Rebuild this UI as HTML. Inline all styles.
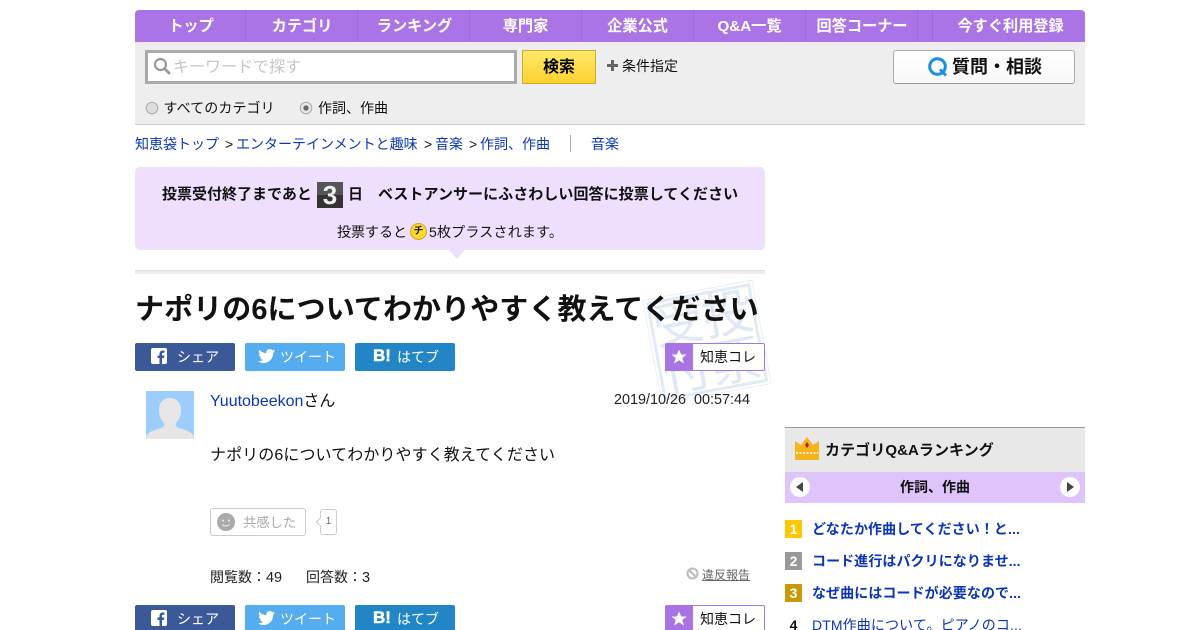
<!DOCTYPE html>
<html lang="ja"><head><meta charset="utf-8"><title>ナポリの6についてわかりやすく教えてください</title>
<style>
*{box-sizing:border-box}
html,body{margin:0;padding:0;width:1200px;height:630px;overflow:hidden;background:#fff}
body{position:relative;font-family:"Liberation Sans","Noto Sans CJK JP",sans-serif;color:#111;font-size:14px}
.a{position:absolute;white-space:nowrap}
a{color:#0b34b8;text-decoration:none}
.nav{left:135px;top:10px;width:950px;height:32px;background:#ab74e6;border-radius:4px 4px 0 0}
.nav i{position:absolute;top:0;width:1px;height:31px;background:#9f68da}
.nav b{position:absolute;top:0;line-height:33px;color:#fff;font-size:15.2px;text-align:center}
.sh{height:28px;width:100px;border-radius:2px;color:#fff;font-size:14px;line-height:29px}
.sh span{position:absolute;top:0}
.col{width:100px;height:28px;border:1px solid #a873e3;border-radius:2px;background:#fff;line-height:27px;font-size:14px}
.col s{position:absolute;left:-1px;top:-1px;width:28px;height:28px;background:#a873e3;border-radius:2px 0 0 2px;display:block}
.col s svg{position:absolute;left:6px;top:6px}
.col span{position:absolute;left:34px;top:0}
.rk{left:785px;width:17px;height:18px;color:#fff;font-weight:bold;font-size:14px;line-height:19px;text-align:center}
.rt{left:812px;font-size:14px;font-weight:bold;line-height:18px;letter-spacing:.08px}
</style></head><body>

<div class="a nav">
<i style="left:110px"></i><i style="left:222px"></i><i style="left:334px"></i><i style="left:446px"></i><i style="left:558px"></i><i style="left:670px"></i><i style="left:782px"></i><i style="left:797px"></i>
<b style="left:1px;width:110px">トップ</b><b style="left:111.500px;width:111px">カテゴリ</b><b style="left:224px;width:111px">ランキング</b><b style="left:335px;width:111px">専門家</b><b style="left:447px;width:111px">企業公式</b><b style="left:559px;width:111px">Q&amp;A一覧</b><b style="left:671.500px;width:111px">回答コーナー</b><b style="left:799.500px;width:152px">今すぐ利用登録</b>
</div>
<div class="a" style="left:135px;top:42px;width:950px;height:83px;background:#eee;border-bottom:1px solid #ccc"></div>

<div class="a" style="left:145px;top:50px;width:372px;height:34px;background:#fff;border:3px solid #aaa"></div>
<svg class="a" style="left:153px;top:57px" width="18" height="18" viewBox="0 0 18 18"><circle cx="7.5" cy="7.5" r="5.5" fill="none" stroke="#999" stroke-width="2.2"/><path d="M11.5 11.5L16 16" stroke="#999" stroke-width="2.8" stroke-linecap="round"/></svg>
<div class="a" style="left:173px;top:57px;font-size:16px;line-height:21px;color:#c6c6c6">キーワードで探す</div>
<div class="a" style="left:522px;top:50px;width:74px;height:34px;background:linear-gradient(#ffe96a,#fdd22e);border:1px solid #cfa92a;font-weight:bold;font-size:16px;line-height:34px;text-align:center;color:#000">検索</div>
<svg class="a" style="left:606px;top:59px" width="13" height="13" viewBox="0 0 13 13"><path d="M6.500 1v11M1 6.500h11" stroke="#666" stroke-width="3"/></svg>
<div class="a" style="left:622px;top:56px;font-size:14px;line-height:20px">条件指定</div>
<div class="a" style="left:893px;top:50px;width:182px;height:34px;background:linear-gradient(#fff,#f8f8f8);border:1px solid #aaa;border-bottom:1px solid #999;border-radius:3px"></div>
<svg class="a" style="left:927px;top:56px" width="22" height="22" viewBox="0 0 22 22"><circle cx="10.500" cy="10.500" r="7.800" fill="none" stroke="#1a8fe3" stroke-width="3"/><path d="M13 13.500L19 19.500" stroke="#1a8fe3" stroke-width="3"/></svg>
<div class="a" style="left:952px;top:55px;font-size:18px;font-weight:bold;line-height:24px">質問・相談</div>

<svg class="a" style="left:145px;top:101px" width="14" height="14" viewBox="0 0 14 14"><circle cx="7" cy="7" r="5.800" fill="#ddd" stroke="#aaa"/></svg>
<div class="a" style="left:163.500px;top:98px;font-size:14px;line-height:21px;letter-spacing:.1px">すべてのカテゴリ</div>
<svg class="a" style="left:299px;top:101px" width="14" height="14" viewBox="0 0 14 14"><circle cx="7" cy="7" r="5.800" fill="#e4e4e4" stroke="#aaa"/><circle cx="7" cy="7" r="2.600" fill="#666"/></svg>
<div class="a" style="left:318px;top:98px;font-size:14px;line-height:21px">作詞、作曲</div>

<div class="a" style="left:135px;top:134px;font-size:14px;line-height:20px"><a href="#">知恵袋トップ</a></div>
<div class="a" style="left:225px;top:134px;font-size:14px;line-height:20px">&gt;</div>
<div class="a" style="left:236px;top:134px;font-size:14px;line-height:20px"><a href="#">エンターテインメントと趣味</a></div>
<div class="a" style="left:424px;top:134px;font-size:14px;line-height:20px">&gt;</div>
<div class="a" style="left:435px;top:134px;font-size:14px;line-height:20px"><a href="#">音楽</a></div>
<div class="a" style="left:469px;top:134px;font-size:14px;line-height:20px">&gt;</div>
<div class="a" style="left:480px;top:134px;font-size:14px;line-height:20px"><a href="#">作詞、作曲</a></div>
<div class="a" style="left:570px;top:135px;width:1px;height:17px;background:#aaa"></div>
<div class="a" style="left:591px;top:134px;font-size:14px;line-height:20px"><a href="#">音楽</a></div>

<div class="a" style="left:135px;top:167px;width:630px;height:83px;background:#eddffd;border-radius:5px"></div>
<div class="a" style="left:449px;top:250px;width:0;height:0;border-left:8px solid transparent;border-right:8px solid transparent;border-top:9px solid #eddffd"></div>
<div class="a" style="left:162px;top:184px;font-size:15px;font-weight:bold;line-height:21px">投票受付終了まであと</div>
<div class="a" style="left:317px;top:182px;width:26px;height:26px;background:linear-gradient(#555 50%,#333 50%);color:#eee;font-size:26px;font-weight:bold;line-height:26px;text-align:center">3</div>
<div class="a" style="left:348px;top:184px;font-size:15px;font-weight:bold;line-height:21px">日</div>
<div class="a" style="left:378px;top:184px;font-size:15px;font-weight:bold;line-height:21px;letter-spacing:.06px">ベストアンサーにふさわしい回答に投票してください</div>
<div class="a" style="left:337px;top:222px;font-size:14px;line-height:21px">投票すると</div>
<div class="a" style="left:410px;top:223px;width:17px;height:17px;border-radius:50%;background:#fbd92f;border:1px solid #d4a820;font-size:10px;font-weight:bold;line-height:15px;text-align:center;color:#222">チ</div>
<div class="a" style="left:429px;top:222px;font-size:14px;line-height:21px;letter-spacing:.2px">5枚プラスされます。</div>

<div class="a" style="left:135px;top:270px;width:630px;height:4px;background:#eee;border-top:1px solid #ddd"></div>

<div class="a" style="left:654px;top:292px;width:106px;height:100px;border:3px solid #e0ebf6;outline:1px solid #e8f0f9;outline-offset:2px;transform:rotate(-10.500deg);color:#dfe9f5;font-size:50px;line-height:48px;overflow:hidden;font-weight:normal;text-align:center;white-space:normal;letter-spacing:0">受投<br>付票</div>

<div class="a" style="left:135px;top:291px;font-size:29px;font-weight:bold;line-height:38px;color:#111;letter-spacing:.08px">ナポリの6についてわかりやすく教えてください</div>

<div class="a sh" style="left:135px;top:343px;background:#3b5998"><svg class="a" style="left:16px;top:5px" width="16" height="16" viewBox="0 0 16 16"><rect width="16" height="16" rx="2" fill="#fff"/><path d="M11 16V10h2l.400-2.500H11V6c0-.800.300-1.200 1.200-1.200h1.300V2.600c-.500-.100-1.100-.100-1.900-.100C10 2.500 8.500 3.600 8.500 5.700v1.800H6.500V10h2v6z" fill="#3b5998"/></svg><span style="left:42px">シェア</span></div>
<div class="a sh" style="left:245px;top:343px;background:#55acee"><svg class="a" style="left:13px;top:6px" width="17" height="14" viewBox="0 0 24 20"><path d="M24 2.400c-.900.400-1.800.700-2.800.800 1-.600 1.800-1.600 2.200-2.700-1 .600-2 1-3.100 1.200C19.300.700 18 0 16.600 0c-2.700 0-4.900 2.200-4.900 4.900 0 .400 0 .800.100 1.100C7.700 5.800 4.100 3.900 1.700.900 1.200 1.600 1 2.500 1 3.400c0 1.700.900 3.200 2.200 4.100-.800 0-1.600-.200-2.200-.600v.100c0 2.400 1.700 4.400 3.900 4.800-.400.100-.800.200-1.300.200-.300 0-.600 0-.900-.100.600 2 2.400 3.400 4.600 3.400-1.700 1.300-3.800 2.100-6.100 2.100-.400 0-.800 0-1.200-.100C2.200 19.300 4.800 20 7.500 20c9.100 0 14-7.500 14-14v-.600c1-.700 1.800-1.600 2.500-3z" fill="#fff"/></svg><span style="left:35px">ツイート</span></div>
<div class="a sh" style="left:355px;top:343px;background:#2285c6"><span style="left:18px;font-weight:bold;font-size:17px;line-height:25px;-webkit-text-stroke:.5px #fff">B!</span><span style="left:42px">はてブ</span></div>
<div class="a col" style="left:665px;top:343px"><s><svg width="16" height="16" viewBox="0 0 16 16"><path d="M8 .500l2.200 5h5.300l-4.200 3.500 1.600 5.500L8 11.300l-4.900 3.200 1.600-5.500L.500 5.500h5.300z" fill="#fff"/></svg></s><span>知恵コレ</span></div>

<svg class="a" style="left:146px;top:391px" width="48" height="48" viewBox="0 0 48 48"><rect width="48" height="48" fill="#9ccdfb"/><path d="M0 48v-2c1-5 9-7 15-9 3-1 4-3 3-5-3-3-5-7-5-13C13 12 17 7 24 7s11 5 11 12c0 6-2 10-5 13-1 2 0 4 3 5 6 2 14 4 15 9v2z" fill="#e6e6e6"/></svg>
<div class="a" style="left:210px;top:391px;font-size:16px;line-height:21px"><a href="#">Yuutobeekon</a>さん</div>
<div class="a" style="left:614px;top:391px;font-size:14.400px;line-height:18px;color:#222">2019/10/26&nbsp; 00:57:44</div>
<div class="a" style="left:210px;top:445px;font-size:16px;line-height:22px;letter-spacing:.09px">ナポリの6についてわかりやすく教えてください</div>

<div class="a" style="left:210px;top:508px;width:96px;height:28px;border:1px solid #ccc;border-radius:3px"></div>
<svg class="a" style="left:217px;top:513px" width="18" height="18" viewBox="0 0 18 18"><circle cx="9" cy="9" r="9" fill="#aaa"/><circle cx="6" cy="7.500" r="1" fill="#eee"/><circle cx="12" cy="7.500" r="1" fill="#eee"/><path d="M5.500 11.500c2 2 5 2 7 0" stroke="#eee" fill="none"/></svg>
<div class="a" style="left:243px;top:512px;font-size:13.300px;line-height:21px;color:#aaa">共感した</div>
<div class="a" style="left:320px;top:509px;width:17px;height:26px;border:1px solid #ccc;border-radius:3px;font-size:10px;line-height:24px;text-align:center;color:#666;background:#fff">1</div>
<div class="a" style="left:317px;top:519px;width:6px;height:6px;border-left:1px solid #ccc;border-bottom:1px solid #ccc;background:#fff;transform:rotate(45deg)"></div>

<div class="a" style="left:210px;top:567px;font-size:14px;line-height:20px;color:#222">閲覧数：<span style="font-size:14.400px">49</span></div>
<div class="a" style="left:306px;top:567px;font-size:14px;line-height:20px;color:#222">回答数：<span style="font-size:14.400px">3</span></div>
<svg class="a" style="left:686px;top:567px" width="13" height="13" viewBox="0 0 13 13"><circle cx="6.500" cy="6.500" r="5" fill="none" stroke="#bbb" stroke-width="2"/><path d="M3 3l7 7" stroke="#bbb" stroke-width="2"/></svg>
<div class="a" style="left:702px;top:566px;font-size:12px;line-height:18px;color:#666;text-decoration:underline">違反報告</div>

<div class="a sh" style="left:135px;top:605px;background:#3b5998"><svg class="a" style="left:16px;top:5px" width="16" height="16" viewBox="0 0 16 16"><rect width="16" height="16" rx="2" fill="#fff"/><path d="M11 16V10h2l.400-2.500H11V6c0-.800.300-1.200 1.200-1.200h1.300V2.600c-.500-.100-1.100-.100-1.900-.100C10 2.500 8.500 3.600 8.500 5.700v1.800H6.500V10h2v6z" fill="#3b5998"/></svg><span style="left:42px">シェア</span></div>
<div class="a sh" style="left:245px;top:605px;background:#55acee"><svg class="a" style="left:13px;top:6px" width="17" height="14" viewBox="0 0 24 20"><path d="M24 2.400c-.900.400-1.800.700-2.800.800 1-.600 1.800-1.600 2.200-2.700-1 .600-2 1-3.100 1.200C19.300.700 18 0 16.600 0c-2.700 0-4.900 2.200-4.900 4.900 0 .400 0 .800.100 1.100C7.700 5.800 4.100 3.900 1.700.900 1.200 1.600 1 2.500 1 3.400c0 1.700.900 3.200 2.200 4.100-.800 0-1.600-.200-2.200-.600v.100c0 2.400 1.700 4.400 3.900 4.800-.400.100-.800.200-1.300.200-.300 0-.600 0-.900-.100.600 2 2.400 3.400 4.600 3.400-1.700 1.300-3.800 2.100-6.100 2.100-.400 0-.800 0-1.200-.100C2.200 19.300 4.800 20 7.500 20c9.100 0 14-7.500 14-14v-.600c1-.700 1.800-1.600 2.500-3z" fill="#fff"/></svg><span style="left:35px">ツイート</span></div>
<div class="a sh" style="left:355px;top:605px;background:#2285c6"><span style="left:18px;font-weight:bold;font-size:17px;line-height:25px;-webkit-text-stroke:.5px #fff">B!</span><span style="left:42px">はてブ</span></div>
<div class="a col" style="left:665px;top:605px"><s><svg width="16" height="16" viewBox="0 0 16 16"><path d="M8 .500l2.200 5h5.300l-4.200 3.500 1.600 5.500L8 11.300l-4.900 3.200 1.600-5.500L.500 5.500h5.300z" fill="#fff"/></svg></s><span>知恵コレ</span></div>

<div class="a" style="left:785px;top:427px;width:300px;height:45px;background:#e8e8e8;border-top:1px solid #999"></div>
<svg class="a" style="left:795px;top:436px" width="24" height="24" viewBox="0 0 24 24"><path d="M0 15V5l6 4 6-8 6 8 6-4v10z" fill="#f2b61c"/><path d="M12 6l2 3-2 3-2-3z" fill="#c0141c"/><rect y="15" width="24" height="9" fill="#f2b61c"/><path d="M1 17h22" stroke="#fff" stroke-width="1.500" stroke-dasharray="2 1.500"/></svg>
<div class="a" style="left:825px;top:441px;font-size:15px;font-weight:bold;line-height:20px;letter-spacing:.08px">カテゴリQ&amp;Aランキング</div>
<div class="a" style="left:785px;top:472px;width:300px;height:31px;background:#dfc3fb;text-align:center;font-size:14px;font-weight:bold;line-height:31px">作詞、作曲</div>
<svg class="a" style="left:790px;top:477px" width="20" height="20" viewBox="0 0 20 20"><circle cx="10" cy="10" r="10" fill="#fff"/><path d="M6 10l7-5v10z" fill="#444"/></svg>
<svg class="a" style="left:1060px;top:477px" width="20" height="20" viewBox="0 0 20 20"><circle cx="10" cy="10" r="10" fill="#fff"/><path d="M14 10L7 5v10z" fill="#444"/></svg>

<div class="a rk" style="top:520px;background:#fdc800">1</div>
<div class="a rt" style="top:520px"><a href="#">どなたか作曲してください！と...</a></div>
<div class="a rk" style="top:552px;background:#999">2</div>
<div class="a rt" style="top:552px"><a href="#">コード進行はパクリになりませ...</a></div>
<div class="a rk" style="top:584px;background:#c99a06">3</div>
<div class="a rt" style="top:584px"><a href="#">なぜ曲にはコードが必要なので...</a></div>
<div class="a rk" style="top:616px;color:#111">4</div>
<div class="a rt" style="top:616px;font-weight:normal;letter-spacing:.12px"><a href="#">DTM作曲について。ピアノのコ...</a></div>

</body></html>
